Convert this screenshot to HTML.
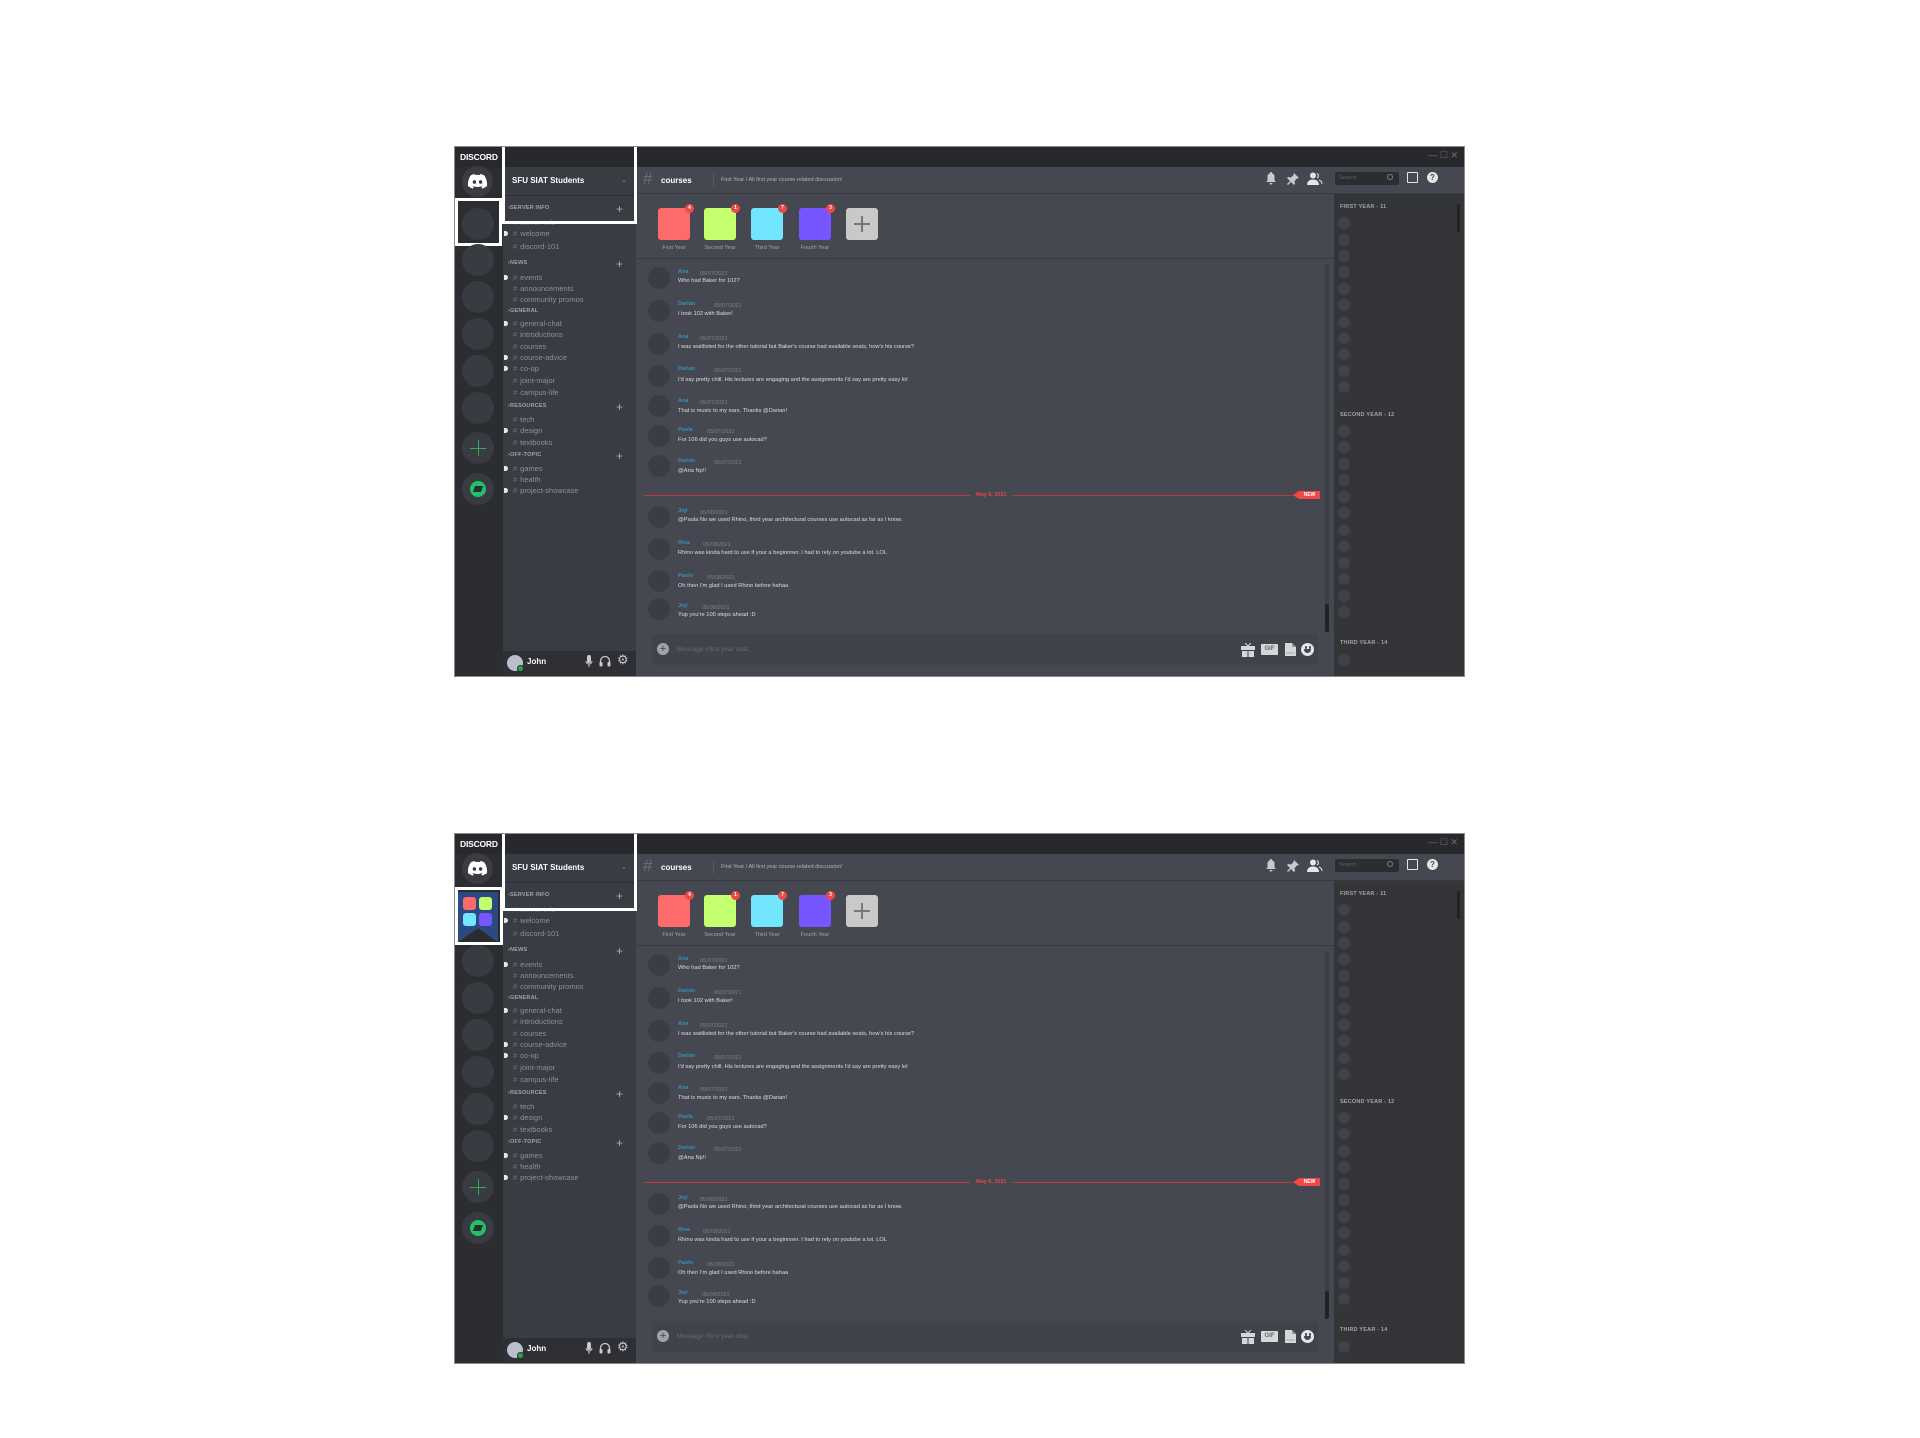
<!DOCTYPE html>
<html><head><meta charset="utf-8"><style>
*{margin:0;padding:0;box-sizing:border-box}
body{width:1920px;height:1438px;background:#fff;position:relative;overflow:hidden;font-family:"Liberation Sans",sans-serif}
.win{position:absolute;left:454px;width:1011px;height:531px;background:#454851;overflow:hidden;border:1px solid #8a8a8a}
.a{position:absolute}
.tb{left:0;top:0;width:1011px;height:20px;background:#28292d}
.sl{left:0;top:20px;width:48px;height:511px;background:#2c2d31}
.cp{left:48px;top:20px;width:133px;height:511px;background:#393c43}
.ml{left:879px;top:47px;width:132px;height:484px;background:#343539}
.circ{position:absolute;border-radius:50%;background:#393b42}
.ch{position:absolute;left:10px;font-size:7.5px;color:#8e9196;white-space:nowrap}
.ch b{font-weight:normal;color:#6d7077;margin-right:3px}
.cat{position:absolute;left:5px;font-size:5.5px;color:#a0a3a8;font-weight:bold;letter-spacing:.2px}
.plus{position:absolute;left:113px;font-size:12px;color:#a9acb0;line-height:10px}
.dot{position:absolute;left:1px;width:4px;height:5px;background:#e6e6e6;border-radius:0 3px 3px 0}
.card{position:absolute;top:61px;width:32px;height:32px;border-radius:3px}
.bad{position:absolute;right:-4px;top:-4px;width:9px;height:9px;border-radius:50%;background:#f04747;color:#fff;font-size:5px;text-align:center;line-height:9px;font-weight:bold}
.lab{position:absolute;top:98px;font-size:5.5px;color:#a0a3a8;white-space:nowrap;transform:translateX(-50%)}
.msg .av{position:absolute;left:193px;width:22px;height:22px;border-radius:50%;background:#3a3d44}
.nm{position:absolute;left:223px;font-size:5.5px;color:#3a8fb7;font-weight:bold}
.dt{position:absolute;font-size:5.5px;color:#7d8087}
.tx{position:absolute;left:223px;font-size:5.7px;color:#dcddde;white-space:nowrap}
.mc{position:absolute;left:883px;width:12px;height:12px;border-radius:50%;background:#404247}
.mh{position:absolute;left:885px;font-size:5.5px;color:#a0a3a8;font-weight:bold;letter-spacing:.2px}
.ic{position:absolute;color:#c8cacd}
</style></head><body>

<div class="win" id="w1" style="top:146px">
<div class="a tb"></div>
<div class="a" style="left:5px;top:5px;font-size:8.5px;font-weight:bold;color:#fff;letter-spacing:-.2px">DISCORD</div>
<div class="a" style="right:6px;top:3px;font-size:9px;color:#6d6f74">— ☐ ✕</div>
<div class="a sl"></div>
<div class="circ" style="left:7px;top:19px;width:31px;height:31px;background:#3a3c42"></div>
<svg class="a" style="left:12px;top:27px" width="21" height="15" viewBox="0 0 24 18"><path fill="#fff" d="M20 1.5A19 19 0 0 0 15.3 0l-.6 1.2a17 17 0 0 0-5.4 0L8.7 0A19 19 0 0 0 4 1.5C1 6 .2 10.3.6 14.6A19 19 0 0 0 6.4 17.5l1.2-2a12 12 0 0 1-1.9-.9l.5-.4a13.7 13.7 0 0 0 11.6 0l.5.4a12 12 0 0 1-1.9.9l1.2 2a19 19 0 0 0 5.8-2.9c.5-5-.8-9.3-3.4-13.1zM8.3 11.9c-1.1 0-2.1-1-2.1-2.3s.9-2.3 2.1-2.3 2.1 1 2.1 2.3-.9 2.3-2.1 2.3zm7.4 0c-1.1 0-2.1-1-2.1-2.3s.9-2.3 2.1-2.3 2.1 1 2.1 2.3-.9 2.3-2.1 2.3z"/></svg>
<div class="sv1">
<div class="circ" style="left:7px;top:61px;width:32px;height:32px"></div>
<div class="a" style="left:0;top:51px;width:47px;height:48px;border:3px solid #fff"></div>
</div>
<div class="rest">
<div class="circ" style="left:7px;top:97px;width:32px;height:32px"></div>
<div class="circ" style="left:7px;top:134px;width:32px;height:32px"></div>
<div class="circ" style="left:7px;top:171px;width:32px;height:32px"></div>
<div class="circ" style="left:7px;top:208px;width:32px;height:32px"></div>
<div class="circ" style="left:7px;top:245px;width:32px;height:32px"></div>
</div>
<div class="rest2">
<div class="circ" style="left:7px;top:285px;width:32px;height:32px"></div>
<div class="a" style="left:15px;top:300.5px;width:16px;height:1px;background:#3ba55c"></div>
<div class="a" style="left:22.5px;top:293px;width:1px;height:16px;background:#3ba55c"></div>
<div class="circ" style="left:7px;top:326px;width:32px;height:32px"></div>
<div class="circ" style="left:15px;top:334px;width:16px;height:16px;background:#23c06a"></div>
<div class="a" style="left:19px;top:339px;width:8px;height:6px;background:#2c2d31;transform:skewX(-20deg)"></div>
</div>

<div class="a cp"></div>
<div class="a" style="left:48px;top:20px;width:133px;height:29px;border-bottom:1px solid #2e3036"></div>
<div class="a" style="left:57px;top:29px;font-size:8px;font-weight:bold;color:#fff">SFU SIAT Students</div>
<div class="a" style="left:166px;top:29px;font-size:7px;color:#8e9196">⌄</div>
<div class="a" style="left:48px;top:50px;width:133px;height:460px">
<div class="cat" style="top:8px">›SERVER INFO</div><div class="plus" style="top:7px">+</div>
<div class="ch" style="top:21px;color:#72757b"><b>#</b>server-info</div>
<div class="dot" style="top:34px"></div><div class="ch" style="top:32px"><b>#</b>welcome</div>
<div class="ch" style="top:45px"><b>#</b>discord-101</div>
<div class="cat" style="top:63px">›NEWS</div><div class="plus" style="top:62px">+</div>
<div class="dot" style="top:78px"></div><div class="ch" style="top:76px"><b>#</b>events</div>
<div class="ch" style="top:87px"><b>#</b>announcements</div>
<div class="ch" style="top:98px"><b>#</b>community promos</div>
<div class="cat" style="top:111px">›GENERAL</div>
<div class="dot" style="top:124px"></div><div class="ch" style="top:122px"><b>#</b>general-chat</div>
<div class="ch" style="top:133px"><b>#</b>introductions</div>
<div class="ch" style="top:145px"><b>#</b>courses</div>
<div class="dot" style="top:158px"></div><div class="ch" style="top:156px"><b>#</b>course-advice</div>
<div class="dot" style="top:169px"></div><div class="ch" style="top:167px"><b>#</b>co-op</div>
<div class="ch" style="top:179px"><b>#</b>joint-major</div>
<div class="ch" style="top:191px"><b>#</b>campus-life</div>
<div class="cat" style="top:206px">›RESOURCES</div><div class="plus" style="top:205px">+</div>
<div class="ch" style="top:218px"><b>#</b>tech</div>
<div class="dot" style="top:231px"></div><div class="ch" style="top:229px"><b>#</b>design</div>
<div class="ch" style="top:241px"><b>#</b>textbooks</div>
<div class="cat" style="top:255px">›OFF-TOPIC</div><div class="plus" style="top:254px">+</div>
<div class="dot" style="top:269px"></div><div class="ch" style="top:267px"><b>#</b>games</div>
<div class="ch" style="top:278px"><b>#</b>health</div>
<div class="dot" style="top:291px"></div><div class="ch" style="top:289px"><b>#</b>project-showcase</div>
</div>
<div class="a" style="left:48px;top:504px;width:133px;height:27px;background:#2e3036"></div>
<div class="a" style="left:52px;top:508px;width:16px;height:16px;border-radius:50%;background:#b9c0c9"></div>
<div class="a" style="left:62px;top:518px;width:7px;height:7px;border-radius:50%;background:#23a55a;border:1px solid #2e3036"></div>
<div class="a" style="left:72px;top:510px;font-size:8px;color:#fff;font-weight:bold">John</div>
<svg class="a" style="left:130px;top:508px" width="8" height="13" viewBox="0 0 8 13"><rect x="2" y="0" width="4" height="8" rx="2" fill="#c8cacd"/><path d="M1 6a3 3 0 0 0 6 0M4 9v3" stroke="#c8cacd" fill="none"/></svg>
<svg class="a" style="left:144px;top:508px" width="12" height="12" viewBox="0 0 12 12"><path d="M1.5 10V6a4.5 4.5 0 0 1 9 0v4" stroke="#c8cacd" stroke-width="1.3" fill="none"/><rect x="0.5" y="7" width="3" height="4.5" rx="1" fill="#c8cacd"/><rect x="8.5" y="7" width="3" height="4.5" rx="1" fill="#c8cacd"/></svg>
<div class="ic" style="left:162px;top:505px;font-size:13px">⚙</div>

<div class="a" style="left:181px;top:20px;width:830px;height:27px;border-bottom:1px solid #383a40;background:#454851"></div>
<div class="a" style="left:188px;top:22px;font-size:17px;color:#6d7077;font-weight:lighter">#</div>
<div class="a" style="left:206px;top:29px;font-size:8px;color:#fff;font-weight:bold">courses</div>
<div class="a" style="left:258px;top:26px;width:1px;height:14px;background:#55585f"></div>
<div class="a" style="left:266px;top:30px;font-size:5.5px;color:#b0b3b8">First Year / All first year course related discussion!</div>
<svg class="a" style="left:811px;top:25px" width="10" height="13" viewBox="0 0 10 13"><path d="M5 0a1 1 0 0 1 1 1.2A3.5 3.5 0 0 1 8.5 5v3.5L10 10H0l1.5-1.5V5A3.5 3.5 0 0 1 4 1.2 1 1 0 0 1 5 0zM3.5 11h3a1.5 1.5 0 0 1-3 0z" fill="#c8cacd"/></svg>
<svg class="a" style="left:832px;top:26px" width="12" height="12" viewBox="0 0 12 12"><path d="M7 0l5 5-2 .5-2.5 2.5.5 3-1 1L4 9 1 12 0 11l3-3-3-3 1-1 3 .5L6.5 2z" fill="#c8cacd"/></svg>
<svg class="a" style="left:852px;top:25px" width="16" height="13" viewBox="0 0 16 13"><circle cx="6" cy="3.5" r="3" fill="#e6e6e6"/><path d="M0 13c0-4 3-5.5 6-5.5s6 1.5 6 5.5z" fill="#e6e6e6"/><path d="M10 1.5a2.5 2.5 0 0 1 0 4.5M12 8c2 .8 3 2 3 4" stroke="#e6e6e6" fill="none"/></svg>
<div class="a" style="left:880px;top:25px;width:64px;height:13px;background:#2b2d31;border-radius:2px"></div>
<div class="a" style="left:884px;top:28px;font-size:5.5px;color:#5e6167">Search</div>
<div class="a" style="left:932px;top:27px;width:6px;height:6px;border:1px solid #7d8087;border-radius:50%"></div>
<div class="a" style="left:952px;top:25px;width:11px;height:11px;border:1.5px solid #e6e6e6;border-radius:1px"></div>
<div class="a" style="left:972px;top:25px;width:11px;height:11px;border-radius:50%;background:#e6e6e6;color:#454851;font-size:8px;font-weight:bold;text-align:center;line-height:11px">?</div>

<div class="card" style="left:203px;background:#ff6b6b"><div class="bad">4</div></div>
<div class="card" style="left:249px;background:#c4ff70"><div class="bad">1</div></div>
<div class="card" style="left:296px;background:#73e6ff"><div class="bad">7</div></div>
<div class="card" style="left:344px;background:#7755ff"><div class="bad">3</div></div>
<div class="card" style="left:391px;background:#c9c9c9"><div style="position:absolute;left:8px;top:15px;width:16px;height:1.5px;background:#777"></div><div style="position:absolute;left:15.3px;top:8px;width:1.5px;height:16px;background:#777"></div></div>
<div class="lab" style="left:219px">First Year</div>
<div class="lab" style="left:265px">Second Year</div>
<div class="lab" style="left:312px">Third Year</div>
<div class="lab" style="left:360px">Fourth Year</div>
<div class="a" style="left:181px;top:111px;width:698px;height:1px;background:#383a40"></div>

<div class="msg">
<div class="av" style="top:120px"></div><div class="nm" style="top:122px">Ana</div><div class="dt" style="left:245px;top:124px">05/07/2021</div><div class="tx" style="top:131px">Who had Baker for 102?</div>
<div class="av" style="top:153px"></div><div class="nm" style="top:154px">Darian</div><div class="dt" style="left:259px;top:156px">05/07/2021</div><div class="tx" style="top:164px">I took 102 with Baker!</div>
<div class="av" style="top:186px"></div><div class="nm" style="top:187px">Ana</div><div class="dt" style="left:245px;top:189px">05/07/2021</div><div class="tx" style="top:197px">I was waitlisted for the other tutorial but Baker's course had available seats, how's his course?</div>
<div class="av" style="top:218px"></div><div class="nm" style="top:219px">Darian</div><div class="dt" style="left:259px;top:221px">05/07/2021</div><div class="tx" style="top:230px">I'd say pretty chill. His lectures are engaging and the assignments I'd say are pretty easy lol</div>
<div class="av" style="top:248px"></div><div class="nm" style="top:251px">Ana</div><div class="dt" style="left:245px;top:253px">05/07/2021</div><div class="tx" style="top:261px">That is music to my ears. Thanks @Darian!</div>
<div class="av" style="top:278px"></div><div class="nm" style="top:280px">Paola</div><div class="dt" style="left:252px;top:282px">05/07/2021</div><div class="tx" style="top:290px">For 106 did you guys use autocad?</div>
<div class="av" style="top:308px"></div><div class="nm" style="top:311px">Darian</div><div class="dt" style="left:259px;top:313px">05/07/2021</div><div class="tx" style="top:321px">@Ana Np!!</div>
<div class="a" style="left:189px;top:348px;width:650px;height:1px;background:#c0393b"></div>
<div class="a" style="left:515px;top:345px;padding:0 6px;background:#454851;font-size:5.5px;color:#e0474a;font-weight:bold">May 8, 2021</div>
<div class="a" style="left:844px;top:344px;width:21px;height:8px;background:#f04747;color:#fff;font-size:5px;font-weight:bold;line-height:8px;text-align:center">NEW</div>
<div class="a" style="left:838px;top:344px;width:0;height:0;border-top:4px solid transparent;border-bottom:4px solid transparent;border-right:6px solid #f04747"></div>
<div class="av" style="top:359px"></div><div class="nm" style="top:361px">Joji</div><div class="dt" style="left:245px;top:363px">05/08/2021</div><div class="tx" style="top:370px">@Paola No we used Rhino, third year architectural courses use autocad as far as I know.</div>
<div class="av" style="top:391px"></div><div class="nm" style="top:393px">Rina</div><div class="dt" style="left:248px;top:395px">05/08/2021</div><div class="tx" style="top:403px">Rhino was kinda hard to use if your a beginnner. I had to rely on youtube a lot. LOL</div>
<div class="av" style="top:423px"></div><div class="nm" style="top:426px">Paolo</div><div class="dt" style="left:252px;top:428px">05/08/2021</div><div class="tx" style="top:436px">Oh then I'm glad I used Rhino before hahaa</div>
<div class="av" style="top:451px"></div><div class="nm" style="top:456px">Joji</div><div class="dt" style="left:247px;top:458px">05/08/2021</div><div class="tx" style="top:465px">Yup you're 100 steps ahead :D</div>
</div>
<div class="a" style="left:870px;top:117px;width:4px;height:368px;background:#3c3f46;border-radius:2px"></div>
<div class="a" style="left:870px;top:457px;width:4px;height:28px;background:#202225;border-radius:2px"></div>
<div class="a" style="left:197px;top:487px;width:666px;height:31px;background:#40434b;border-radius:4px"></div>
<div class="a" style="left:202px;top:496px;width:12px;height:12px;border-radius:50%;background:#a0a3a8;color:#40434b;font-size:11px;line-height:12px;text-align:center">+</div>
<div class="a" style="left:222px;top:499px;font-size:6.5px;color:#666a71">Message #first year chat</div>
<svg class="a" style="left:786px;top:496px" width="14" height="14" viewBox="0 0 14 14"><path d="M4 0l3 3 3-3" stroke="#d6d7d9" fill="none"/><rect x="0" y="3" width="14" height="4" fill="#d6d7d9"/><rect x="1" y="8" width="5.5" height="6" fill="#d6d7d9"/><rect x="7.5" y="8" width="5.5" height="6" fill="#d6d7d9"/></svg>
<div class="a" style="left:806px;top:497px;width:17px;height:11px;background:#d6d7d9;border-radius:1px;font-size:6px;font-weight:bold;color:#666;text-align:center;line-height:11px">GIF</div>
<svg class="a" style="left:830px;top:496px" width="11" height="13" viewBox="0 0 11 13"><path d="M0 0h7l4 4v9H0z" fill="#d6d7d9"/><path d="M7 0v4h4" fill="#999"/><path d="M1 10h9" stroke="#888" stroke-width=".6"/></svg>
<div class="a" style="left:846px;top:496px;width:13px;height:13px;border-radius:50%;background:#e6e6e6"></div>
<div class="a" style="left:849.5px;top:499px;width:2px;height:3px;background:#454851;border-radius:1px"></div>
<div class="a" style="left:853.5px;top:499px;width:2px;height:3px;background:#454851;border-radius:1px"></div>
<div class="a" style="left:849px;top:502px;width:7px;height:4px;border-radius:0 0 4px 4px;background:#454851"></div>

<div class="a ml"></div>
<div class="a" style="left:1002px;top:57px;width:3px;height:28px;background:#202225;border-radius:2px"></div>
<div class="mh" style="top:57px">FIRST YEAR - 11</div>
<div class="mc" style="top:70px"></div><div class="mc" style="top:87px"></div><div class="mc" style="top:103px"></div><div class="mc" style="top:119px"></div><div class="mc" style="top:136px"></div><div class="mc" style="top:152px"></div><div class="mc" style="top:169px"></div><div class="mc" style="top:185px"></div><div class="mc" style="top:201px"></div><div class="mc" style="top:218px"></div><div class="mc" style="top:234px"></div>
<div class="mh" style="top:265px">SECOND YEAR - 12</div>
<div class="mc" style="top:278px"></div><div class="mc" style="top:294px"></div><div class="mc" style="top:311px"></div><div class="mc" style="top:327px"></div><div class="mc" style="top:344px"></div><div class="mc" style="top:360px"></div><div class="mc" style="top:377px"></div><div class="mc" style="top:393px"></div><div class="mc" style="top:410px"></div><div class="mc" style="top:426px"></div><div class="mc" style="top:443px"></div><div class="mc" style="top:459px"></div>
<div class="mh" style="top:493px">THIRD YEAR - 14</div>
<div class="mc" style="top:507px"></div>

<div class="a" style="left:47px;top:0;width:135px;height:77px;border:3px solid #fff;border-top:none"></div>
</div>

<script>
var w=document.getElementById('w1').cloneNode(true);w.id='w2';w.style.top='833px';
var s=w.querySelector('.sv1');
s.innerHTML='<div class="a" style="left:0;top:53px;width:48px;height:58px;border:3px solid #fff;background:#2c2d31"></div>'+
'<svg class="a" style="left:3px;top:58px" width="40" height="50" viewBox="0 0 40 50"><path d="M0 0h40v50L20 36 0 50z" fill="#2d4a80"/><path d="M3 50L20 38 37 50z" fill="#2a2b2f"/><rect x="5" y="5" width="13" height="13" rx="3" fill="#ff6b6b"/><rect x="21" y="5" width="13" height="13" rx="3" fill="#c4ff70"/><rect x="5" y="21" width="13" height="13" rx="3" fill="#73e6ff"/><rect x="21" y="21" width="13" height="13" rx="3" fill="#7755ff"/></svg>';
var r=w.querySelector('.rest');r.style.transform='translateY(14px)';
r.insertAdjacentHTML('beforeend','<div class="circ" style="left:7px;top:282px;width:32px;height:32px"></div>');
w.querySelector('.rest2').style.transform='translateY(52px)';
document.body.appendChild(w);
</script>
</body></html>
